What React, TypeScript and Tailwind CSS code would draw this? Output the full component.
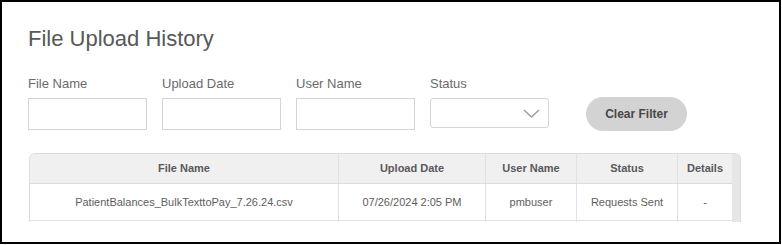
const FILTERS = ["File Name", "Upload Date", "User Name"];

const COLUMNS: { label: string; width: string }[] = [
  { label: "File Name", width: "w-[309px]" },
  { label: "Upload Date", width: "w-[147px]" },
  { label: "User Name", width: "w-[91px]" },
  { label: "Status", width: "w-[101px]" },
  { label: "Details", width: "w-[54px]" },
];

const ROWS = [
  [
    "PatientBalances_BulkTexttoPay_7.26.24.csv",
    "07/26/2024 2:05 PM",
    "pmbuser",
    "Requests Sent",
    "-",
  ],
  ["", "", "", "", ""],
];

const ChevronDown = () => (
  <svg width="17" height="9" viewBox="0 0 17 9" fill="none">
    <path d="M1 1l7.5 7 7.5-7" stroke="#9a9a9a" strokeWidth="1.3" />
  </svg>
);

export default function App() {
  return (
    <div className="h-[245px] w-[782px] bg-white font-['Liberation_Sans',Arial,sans-serif]">
      <div className="h-[244px] w-[781px] border-2 border-black pl-[26px] pt-[24px]">
        {/* ── Title ─────────────────────────────────── */}
        <h1 className="text-[22px] leading-[26px] text-[#585858]">
          File Upload History
        </h1>

        {/* ── Filters ───────────────────────────────── */}
        <div className="mt-[24px] flex items-end">
          {FILTERS.map((label) => (
            <div key={label} className="mr-[15px] flex w-[119px] flex-col">
              <span className="text-[13px] leading-[15px] text-[#6a6a6a]">
                {label}
              </span>
              <input
                type="text"
                className="mt-[7px] h-[32px] w-full border border-[#d4d4d4] bg-white outline-none"
              />
            </div>
          ))}
          <div className="flex w-[119px] flex-col">
            <span className="text-[13px] leading-[15px] text-[#6a6a6a]">
              Status
            </span>
            <div className="mb-[2px] mt-[7px] flex h-[30px] w-full items-center justify-end rounded-[3px] border border-[#d4d4d4] pr-[8px]">
              <ChevronDown />
            </div>
          </div>
          <button
            type="button"
            className="mb-[-1px] ml-[37px] h-[34px] w-[101px] rounded-full bg-[#d3d3d3] text-[12px] font-bold text-[#474747]"
          >
            Clear Filter
          </button>
        </div>

        {/* ── Table ─────────────────────────────────── */}
        <div className="ml-px mt-[23px] flex h-[69px] w-[712px] overflow-hidden rounded-t-[6px] border-x border-t border-[#dcdcdc]">
          <div className="flex flex-col">
            <div className="flex h-[30px] shrink-0 border-b border-[#dcdcdc] bg-[#f0f0f0]">
              {COLUMNS.map((col, i) => (
                <div
                  key={col.label}
                  className={`${col.width} flex items-center justify-center text-[11px] font-bold text-[#595959] ${
                    i < COLUMNS.length - 1 ? "border-r border-[#e2e2e2]" : ""
                  }`}
                >
                  {col.label}
                </div>
              ))}
            </div>
            {ROWS.map((row, r) => (
              <div
                key={r}
                className="flex h-[37px] shrink-0 border-b border-[#e2e2e2]"
              >
                {row.map((cell, i) => (
                  <div
                    key={i}
                    className={`${COLUMNS[i].width} flex items-center justify-center text-[11px] text-[#5e5e5e] ${
                      i < row.length - 1 ? "border-r border-[#e2e2e2]" : ""
                    }`}
                  >
                    {cell}
                  </div>
                ))}
              </div>
            ))}
          </div>
          <div className="w-[9px] shrink-0 bg-[#e6e6e6]" />
        </div>
      </div>
    </div>
  );
}
